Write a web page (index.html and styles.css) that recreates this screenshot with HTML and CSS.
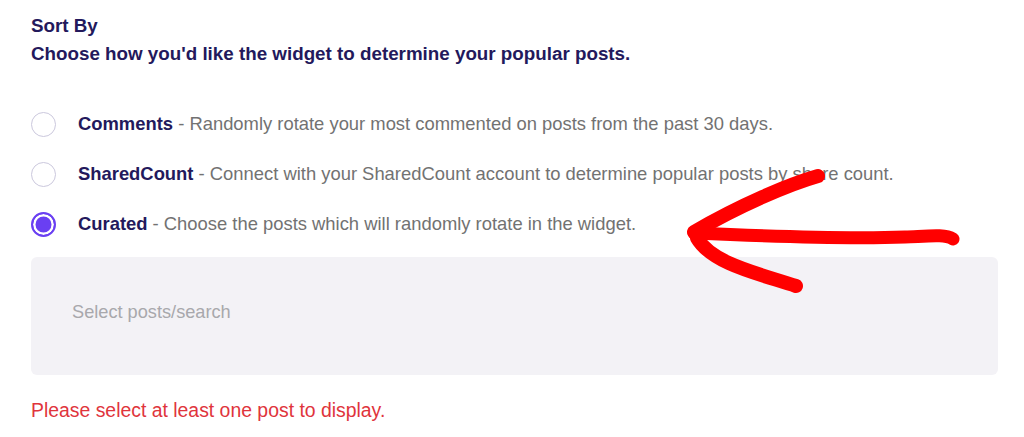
FILE: index.html
```html
<!DOCTYPE html>
<html>
<head>
<meta charset="utf-8">
<link rel="stylesheet" href="styles.css">
</head>
<body>
<div class="panel">
  <div class="title">Sort By</div>
  <div class="subtitle">Choose how you'd like the widget to determine your popular posts.</div>
  <div class="options">
    <div class="option"><span class="radio"></span><span class="label"><b>Comments</b> - Randomly rotate your most commented on posts from the past 30 days.</span></div>
    <div class="option"><span class="radio"></span><span class="label"><b>SharedCount</b> - Connect with your SharedCount account to determine popular posts by share count.</span></div>
    <div class="option"><span class="radio checked"></span><span class="label"><b>Curated</b> - Choose the posts which will randomly rotate in the widget.</span></div>
  </div>
  <div class="select">Select posts/search</div>
  <div class="error">Please select at least one post to display.</div>
  <svg class="arrow" width="1024" height="437" viewBox="0 0 1024 437">
    <g fill="none" stroke="#ff0000" stroke-linecap="round" stroke-linejoin="round">
      <path d="M818 176 C 790 184, 740 205, 694 232" stroke-width="14"/>
      <path d="M694 233 C 760 236, 850 239, 905 237 C 930 236, 945 234, 953 239" stroke-width="13"/>
      <path d="M697 238 C 712 264, 760 274, 796 286" stroke-width="14"/>
    </g>
  </svg>
</div>
</body>
</html>
```

FILE: styles.css
```css
html, body {
  margin: 0;
  padding: 0;
  background: #ffffff;
}
body {
  font-family: "Liberation Sans", Arial, sans-serif;
}
.panel {
  position: relative;
  width: 1024px;
  height: 437px;
  box-sizing: border-box;
  padding: 12px 26px 0 31px;
  overflow: hidden;
}
.title, .subtitle {
  font-size: 18.8px;
  font-weight: bold;
  line-height: 28px;
  color: #23195c;
}
.options {
  margin-top: 31px;
  display: flex;
  flex-direction: column;
}
.option {
  height: 50px;
  display: flex;
  align-items: center;
}
.radio {
  width: 25px;
  height: 25px;
  box-sizing: border-box;
  border: 1.5px solid #cbc8dd;
  border-radius: 50%;
  margin-right: 22px;
  flex: none;
  background: #fff;
}
.radio.checked {
  border: 2px solid #6a3ff2;
  background: #6a3ff2;
  box-shadow: inset 0 0 0 2.5px #fff;
}
.label {
  font-size: 18.4px;
  color: #727272;
  white-space: nowrap;
}
.label b {
  color: #23195c;
}
.select {
  margin-top: 8px;
  height: 118px;
  box-sizing: border-box;
  background: #f3f2f6;
  border-radius: 6px;
  padding: 44px 0 0 41px;
  font-size: 18.2px;
  line-height: 22px;
  color: #a8a8ac;
}
.error {
  margin-top: 21px;
  font-size: 19.4px;
  line-height: 28px;
  color: #e0343c;
}
.arrow {
  position: absolute;
  left: 0;
  top: 0;
  pointer-events: none;
}
```
